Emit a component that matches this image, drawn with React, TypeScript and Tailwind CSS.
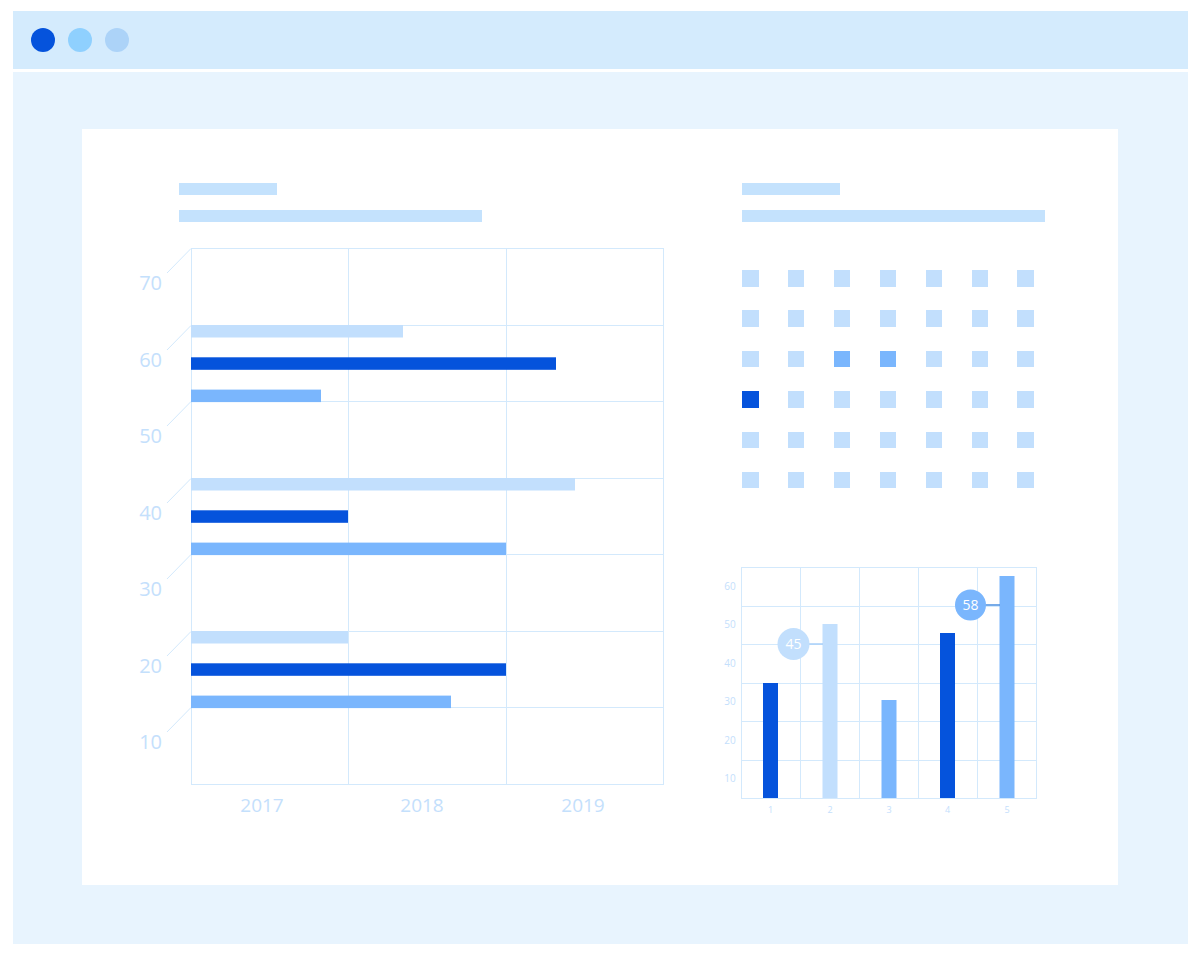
import React from "react";

const LIGHT = "#c2dffd";
const DARK = "#0553dc";
const MID = "#7ab6fd";
const GRID = "#d3e9fc";
const LABEL = "#c4e0fc";
const FONT = "'Open Sans', 'Liberation Sans', sans-serif";

function LeftChart() {
  const xs = [191, 348, 506, 663];
  const ys = Array.from({ length: 8 }, (_, i) => Math.round(248 + i * 76.57));
  const labels = ["70", "60", "50", "40", "30", "20", "10"];
  const groups = [
    { y: 325, w: [403, 556, 321] },
    { y: 478, w: [575, 348, 506] },
    { y: 631, w: [348, 506, 451] },
  ];
  const colors = [LIGHT, DARK, MID];
  return (
    <svg width={535} height={580} viewBox="130 240 535 580" className="block mt-[18px]">
      {xs.map((x) => (
        <line key={x} x1={x + 0.5} y1={248} x2={x + 0.5} y2={785} stroke={GRID} strokeWidth={1} />
      ))}
      {ys.map((y) => (
        <line key={y} x1={191} y1={y + 0.5} x2={664} y2={y + 0.5} stroke={GRID} strokeWidth={1} />
      ))}
      {ys.slice(0, 7).map((y, i) => (
        <g key={"d" + y}>
          <line x1={167} y1={y + 25} x2={191} y2={y + 0.5} stroke={GRID} strokeWidth={1} />
          <text x={162} y={y + 42} textAnchor="end" fontSize={20} fill={LABEL} fontFamily={FONT}>
            {labels[i]}
          </text>
        </g>
      ))}
      {groups.map((g) =>
        g.w.map((w, j) => (
          <rect key={g.y + "-" + j} x={191} y={g.y + j * 32.3} width={w - 191} height={12.5} fill={colors[j]} />
        ))
      )}
      {[
        ["2017", 262],
        ["2018", 422],
        ["2019", 583],
      ].map(([t, x]) => (
        <text key={t as string} x={x as number} y={812} textAnchor="middle" fontSize={19} fill={LABEL} fontFamily={FONT}>
          {t}
        </text>
      ))}
    </svg>
  );
}

function RightChart() {
  const xs = [741, 800, 859, 918, 977, 1036];
  const ys = [567, 605.5, 644, 682.5, 721, 759.5, 798];
  const ylabels = ["60", "50", "40", "30", "20", "10"];
  const bars = [
    { x: 763, top: 683, c: DARK },
    { x: 822.5, top: 624, c: LIGHT },
    { x: 881.5, top: 700, c: MID },
    { x: 940, top: 633, c: DARK },
    { x: 999.5, top: 576, c: MID },
  ];
  return (
    <svg width={330} height={260} viewBox="715 560 330 260" className="block mt-[71.5px] -ml-[27px]">
      {xs.map((x) => (
        <line key={x} x1={x + 0.5} y1={567} x2={x + 0.5} y2={799} stroke={GRID} strokeWidth={1} />
      ))}
      {ys.map((y) => (
        <line key={y} x1={741} y1={Math.round(y) + 0.5} x2={1037} y2={Math.round(y) + 0.5} stroke={GRID} strokeWidth={1} />
      ))}
      {ylabels.map((l, i) => (
        <text key={l} x={730} y={(ys[i] + ys[i + 1]) / 2 + 3.5} textAnchor="middle" fontSize={10} fill={LABEL} fontFamily={FONT}>
          {l}
        </text>
      ))}
      {bars.map((b, i) => (
        <g key={i}>
          <rect x={b.x} y={b.top} width={15} height={798 - b.top} fill={b.c} />
          <text x={b.x + 7.5} y={813} textAnchor="middle" fontSize={9} fill={LABEL} fontFamily={FONT}>
            {i + 1}
          </text>
        </g>
      ))}
      <line x1={808} y1={644} x2={823} y2={644} stroke="#a9cff8" strokeWidth={1.5} />
      <circle cx={793.5} cy={644} r={16} fill={LIGHT} />
      <text x={793.5} y={649} textAnchor="middle" fontSize={14} fill="#ffffff" fontFamily={FONT}>
        45
      </text>
      <line x1={985} y1={605} x2={1000} y2={605} stroke="#4a8fe0" strokeWidth={1.5} />
      <circle cx={970.5} cy={605} r={15.5} fill={MID} />
      <text x={970.5} y={610} textAnchor="middle" fontSize={14} fill="#ffffff" fontFamily={FONT}>
        58
      </text>
    </svg>
  );
}

function Squares() {
  const special: Record<string, string> = { "2-2": MID, "2-3": MID, "3-0": DARK };
  return (
    <div className="mt-[48px] flex flex-col gap-y-[23.9px] w-[292px]">
      {Array.from({ length: 6 }, (_, r) => (
        <div key={r} className="flex justify-between">
          {Array.from({ length: 7 }, (_, c) => (
            <div
              key={c}
              className="w-[16.5px] h-[16.5px]"
              style={{ backgroundColor: special[`${r}-${c}`] ?? LIGHT }}
            />
          ))}
        </div>
      ))}
    </div>
  );
}

function TextBars() {
  return (
    <div className="flex flex-col gap-[15px]">
      <div className="w-[98px] h-[12px] bg-[#c4e2fd]" />
      <div className="w-[303px] h-[12px] bg-[#c4e2fd]" />
    </div>
  );
}

export default function App() {
  return (
    <div className="w-[1200px] h-[956px] bg-white pt-[11px] pl-[13px]" style={{ fontFamily: FONT }}>
      <div className="w-[1175px] h-[933px] flex flex-col">
        <div className="h-[58px] bg-[#d4ebfd] flex items-center pl-[18px] gap-[13px] shrink-0">
          <div className="w-[24px] h-[24px] rounded-full bg-[#0553dc]" />
          <div className="w-[24px] h-[24px] rounded-full bg-[#8fd0fe]" />
          <div className="w-[24px] h-[24px] rounded-full bg-[#acd3f8]" />
        </div>
        <div className="h-[3px] shrink-0" />
        <div className="flex-1 bg-[#e8f4fe] pt-[57px] pl-[69px]">
          <div className="w-[1036px] h-[756px] bg-white flex pt-[54px] pl-[48px]">
            <div className="w-[535px] flex flex-col">
              <div className="ml-[49px]">
                <TextBars />
              </div>
              <LeftChart />
            </div>
            <div className="ml-[77px] w-[303px] flex flex-col">
              <TextBars />
              <Squares />
              <RightChart />
            </div>
          </div>
        </div>
      </div>
    </div>
  );
}
